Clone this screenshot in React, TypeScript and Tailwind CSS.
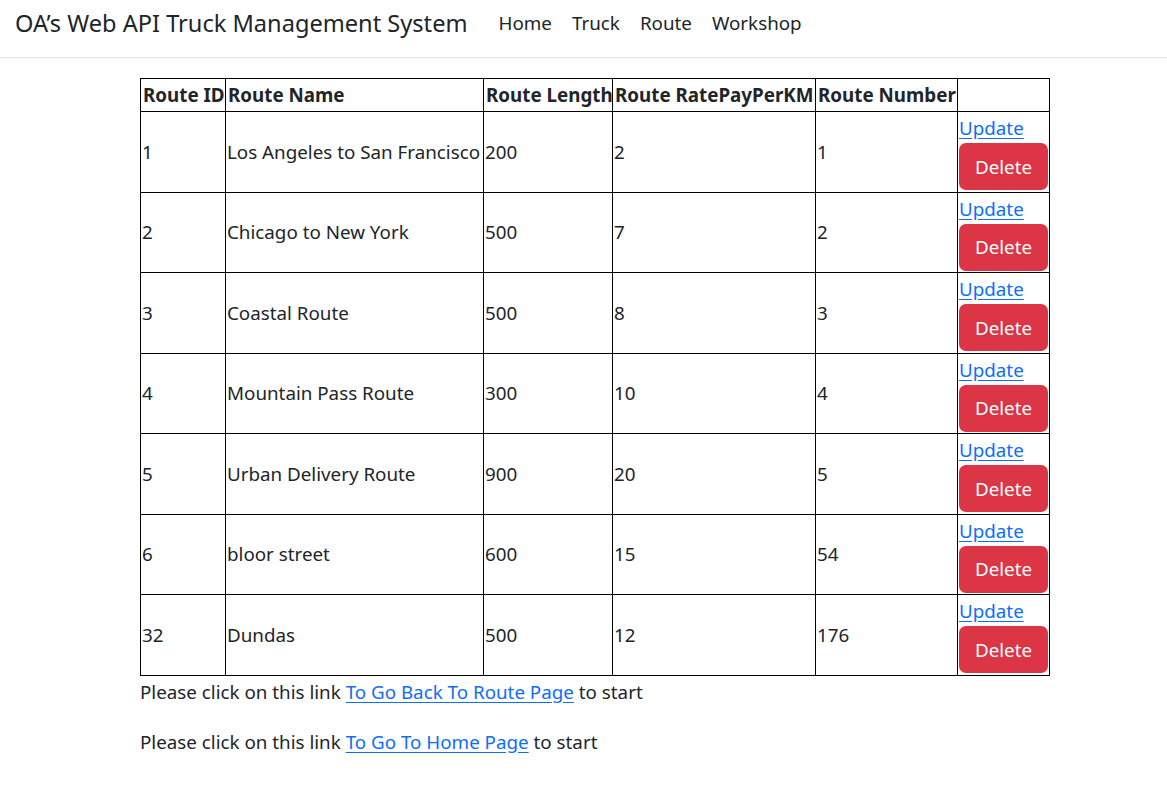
import React from "react";

type Route = {
  id: number;
  name: string;
  length: number;
  rate: number;
  number: number;
};

const routes: Route[] = [
  { id: 1, name: "Los Angeles to San Francisco", length: 200, rate: 2, number: 1 },
  { id: 2, name: "Chicago to New York", length: 500, rate: 7, number: 2 },
  { id: 3, name: "Coastal Route", length: 500, rate: 8, number: 3 },
  { id: 4, name: "Mountain Pass Route", length: 300, rate: 10, number: 4 },
  { id: 5, name: "Urban Delivery Route", length: 900, rate: 20, number: 5 },
  { id: 6, name: "bloor street", length: 600, rate: 15, number: 54 },
  { id: 32, name: "Dundas", length: 500, rate: 12, number: 176 },
];

const font = { fontFamily: '"Noto Sans", "Open Sans", sans-serif' };

function Navbar() {
  return (
    <nav className="flex h-[58px] items-start border-b border-[#e5e5e5] pt-[8px] shadow-[0_1px_2px_rgba(0,0,0,0.03)]">
      <a className="ml-[15px] mr-[21px] text-[23.6px] leading-[30px] text-[#212529]">
        OA’s Web API Truck Management System
      </a>
      <ul className="flex text-[18.8px] leading-[30px] text-[#212529]">
        {["Home", "Truck", "Route", "Workshop"].map((item) => (
          <li key={item}>
            <a className="block px-[10px]">{item}</a>
          </li>
        ))}
      </ul>
    </nav>
  );
}

export default function App() {
  return (
    <div className="min-h-[801px] bg-white text-[#212529]" style={font}>
      <Navbar />

      <main className="ml-[140px] mt-[20px] w-[909px]">
        <table className="w-[909px] table-fixed border-collapse border border-black text-[18.8px] leading-[30px]">
          <colgroup>
            <col className="w-[85px]" />
            <col className="w-[258px]" />
            <col className="w-[129px]" />
            <col className="w-[203px]" />
            <col className="w-[142px]" />
            <col className="w-[92px]" />
          </colgroup>
          <thead>
            <tr className="h-[33px]">
              <th className="border border-black px-[2px] text-left font-bold whitespace-nowrap">Route ID</th>
              <th className="border border-black px-[2px] text-left font-bold whitespace-nowrap">Route Name</th>
              <th className="border border-black px-[2px] text-left font-bold whitespace-nowrap">Route Length</th>
              <th className="border border-black px-[2px] text-left font-bold whitespace-nowrap">Route RatePayPerKM</th>
              <th className="border border-black px-[2px] text-left font-bold whitespace-nowrap">Route Number</th>
              <th className="border border-black px-[2px]"></th>
            </tr>
          </thead>
          <tbody>
            {routes.map((r) => (
              <tr key={r.id} className="h-[80.5px]">
                <td className="border border-black px-[1px] align-middle">{r.id}</td>
                <td className="border border-black px-[1px] align-middle whitespace-nowrap">{r.name}</td>
                <td className="border border-black px-[1px] align-middle">{r.length}</td>
                <td className="border border-black px-[1px] align-middle">{r.rate}</td>
                <td className="border border-black px-[1px] align-middle">{r.number}</td>
                <td className="border border-black px-[1px] align-middle">
                  <div className="flex flex-col items-start">
                    <a className="text-[#0d6efd] underline underline-offset-[3px]">Update</a>
                    <button className="h-[47px] w-[89px] rounded-[7px] bg-[#dc3545] text-[18.8px] leading-[30px] text-white">
                      Delete
                    </button>
                  </div>
                </td>
              </tr>
            ))}
          </tbody>
        </table>

        <p className="mb-[20px] mt-[1px] text-[18.8px] leading-[30px]">
          Please click on this link{" "}
          <a className="text-[#0d6efd] underline underline-offset-[3px]">To Go Back To Route Page</a> to start
        </p>
        <p className="text-[18.8px] leading-[30px]">
          Please click on this link{" "}
          <a className="text-[#0d6efd] underline underline-offset-[3px]">To Go To Home Page</a> to start
        </p>
      </main>
    </div>
  );
}
